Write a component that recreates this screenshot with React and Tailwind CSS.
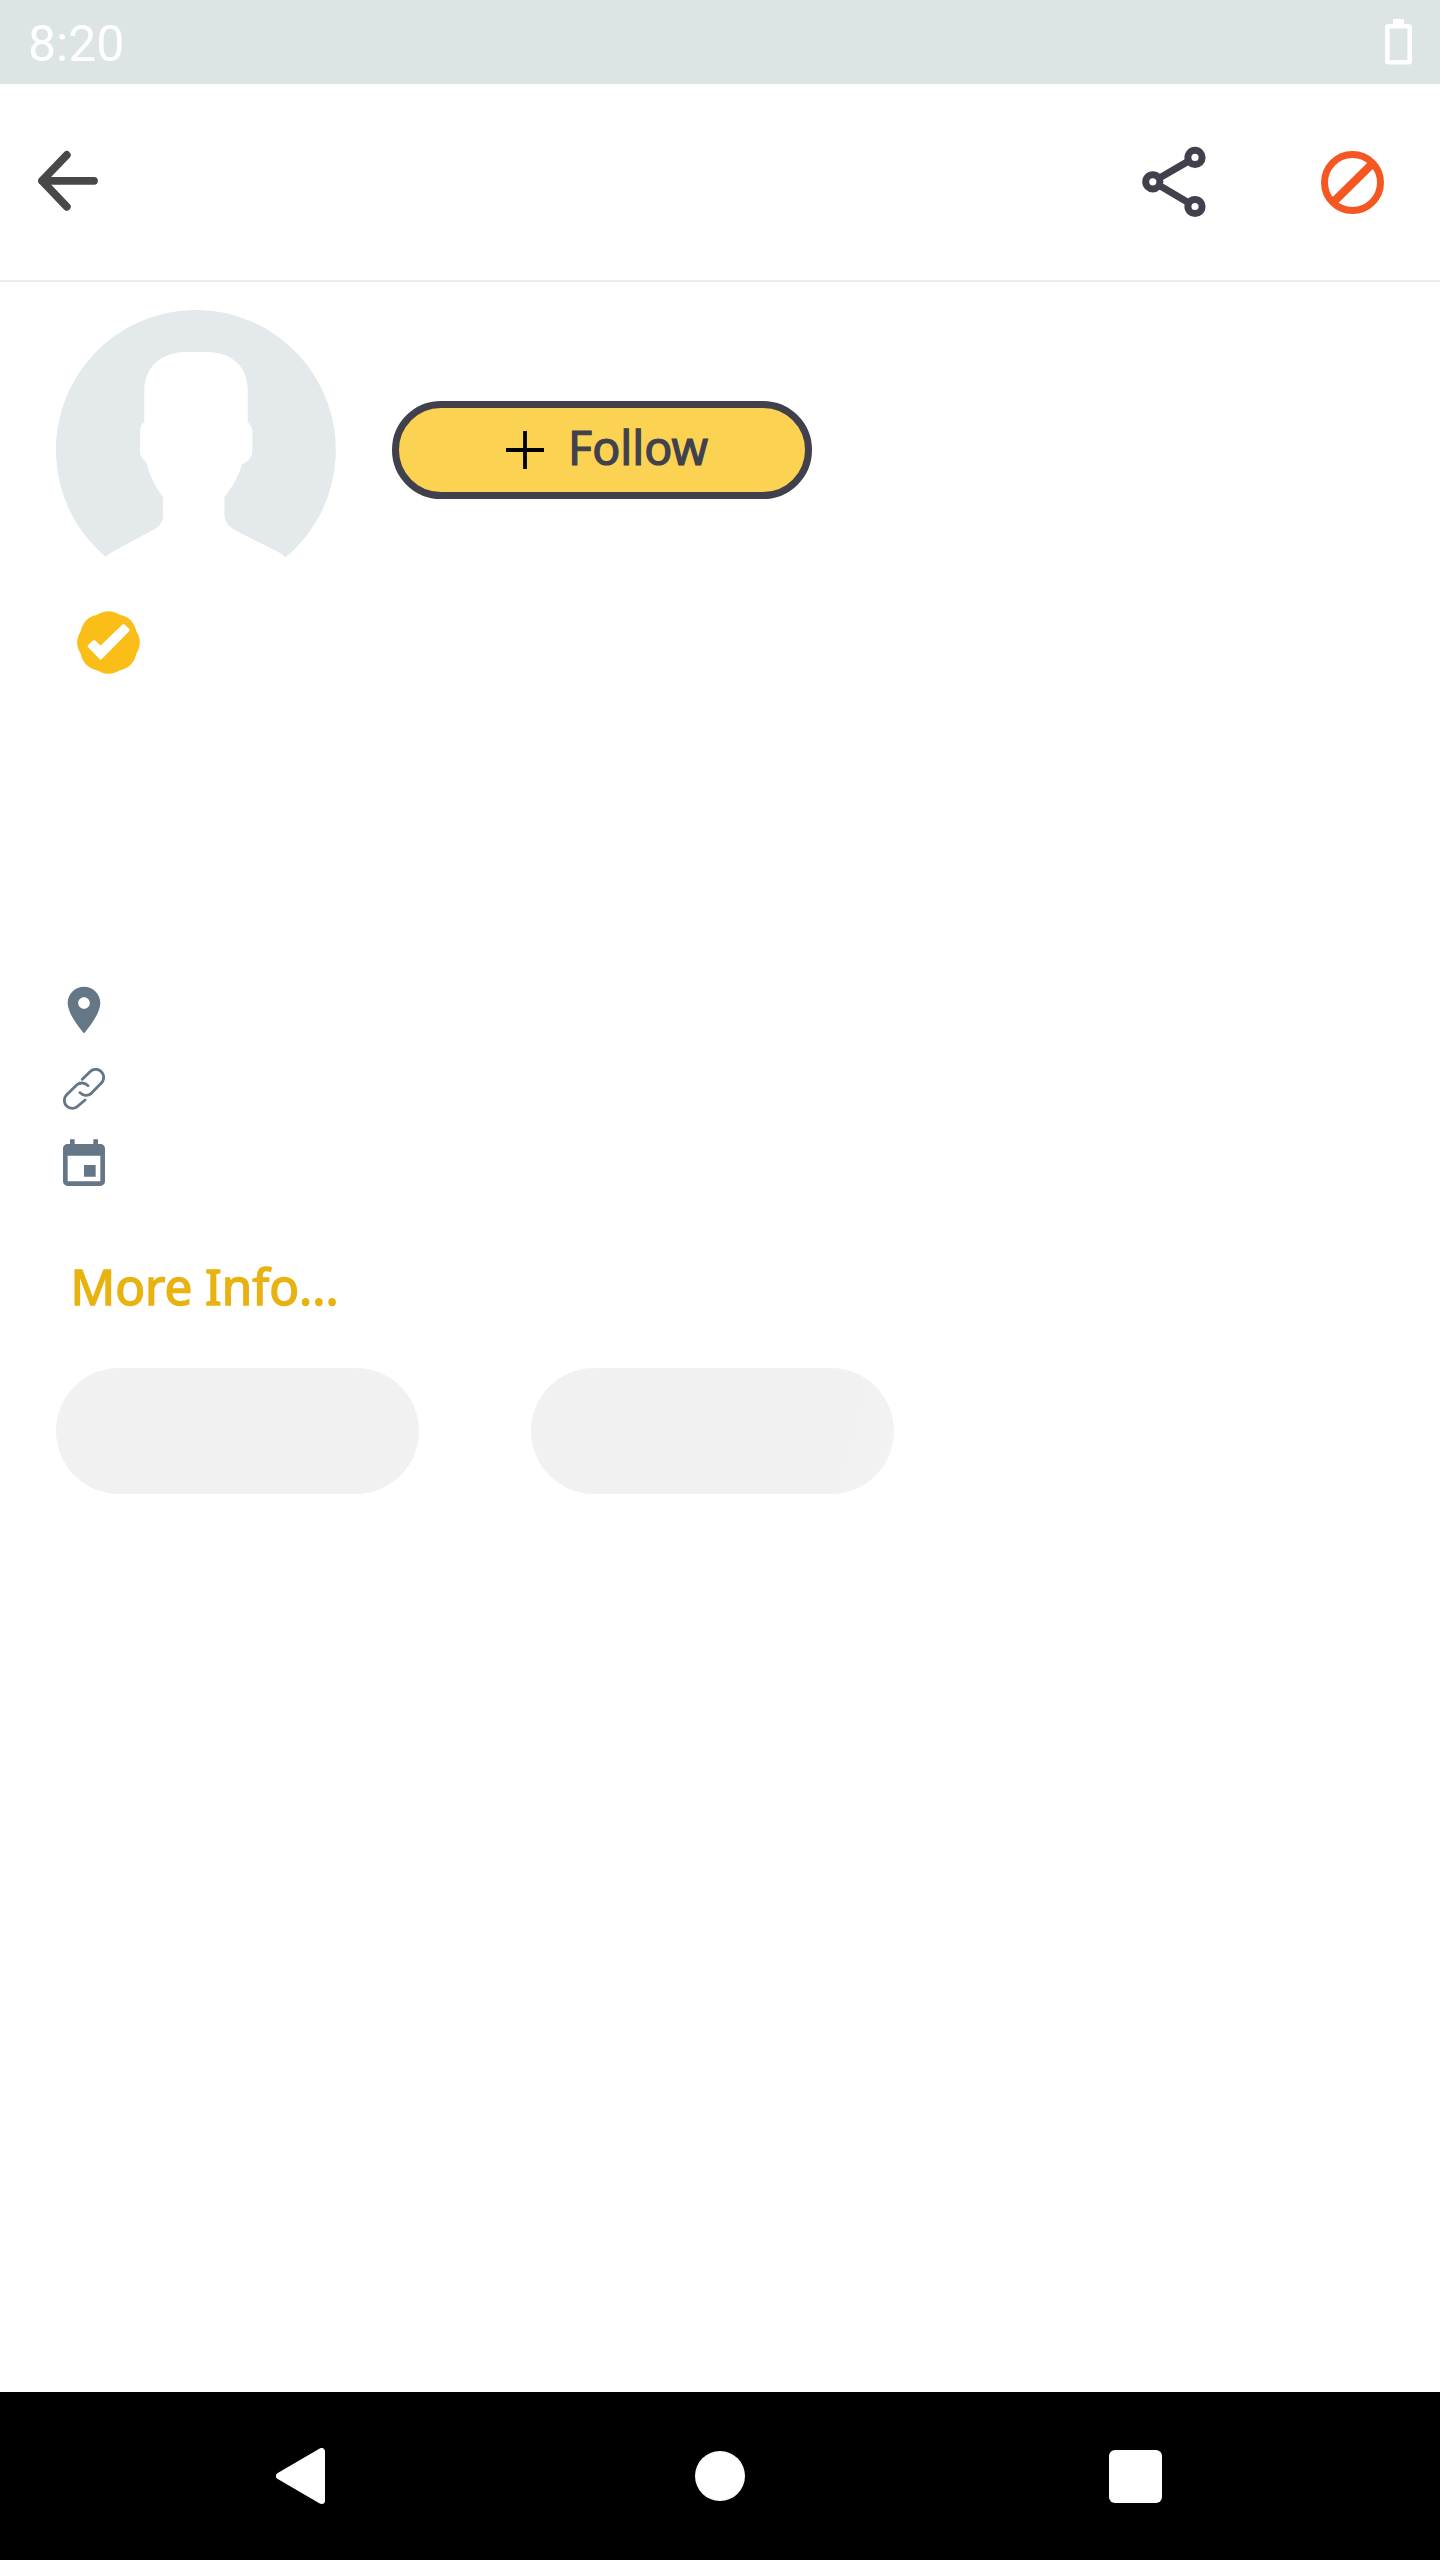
const LOBES = [
  [31.5, 19.84], [39.74, 23.26], [43.16, 31.5], [39.74, 39.74],
  [31.5, 43.16], [23.26, 39.74], [19.84, 31.5], [23.26, 23.26],
];

function StatusBar() {
  return (
    <div className="flex h-[84px] shrink-0 items-start justify-between bg-[#dce4e5] pl-7 pr-7 text-white">
      <span className="mt-[15px] font-['Roboto',sans-serif] text-[50px] leading-[58px]">8:20</span>
      <svg className="mt-[19px] h-[46px] w-[27px]" viewBox="0 0 27 46">
        <path d="M8 0h11v6H8z" fill="#fff" />
        <rect x="2.3" y="7.3" width="22.4" height="36" rx="1.2" fill="none" stroke="#fff" strokeWidth="4.6" />
      </svg>
    </div>
  );
}

function Header() {
  return (
    <header className="flex h-[198px] shrink-0 items-start border-b-2 border-[#e6ecf0] bg-white pl-[38px] pr-14">
      <svg className="mt-[66px] h-[62px] w-[60px]" viewBox="38 150 60 62" fill="none" stroke="#484848" strokeWidth="7.8" strokeLinecap="round" strokeLinejoin="round">
        <path d="M66.8 155L42 180.8l24.8 26M42 180.8h52" />
      </svg>
      <svg className="ml-auto mt-[62px] h-[72px] w-[64px]" viewBox="1142 146 64 72" fill="none" stroke="#41404d" strokeWidth="7">
        <path d="M1159 178.3L1189 160.9M1159 185.3L1189 203" />
        <circle cx="1152.8" cy="181.8" r="7.1" />
        <circle cx="1195" cy="157.4" r="7.1" />
        <circle cx="1195" cy="206.5" r="7.1" />
      </svg>
      <svg className="ml-[115px] mt-[67px] h-[63px] w-[63px]" viewBox="0 0 63 63" fill="none" stroke="#f55723">
        <circle cx="31.5" cy="31.5" r="28" strokeWidth="7" />
        <path d="M14 49.5L50 14" strokeWidth="8.2" />
      </svg>
    </header>
  );
}

function Avatar() {
  return (
    <svg className="h-[248px] w-[280px]" viewBox="48 60 840 744" fill="#e4eaec">
      <path d="M197 801A420 420 0 1 1 737 802Q728 793 715 786L588 722Q553 705 553 672V622C577 592 595 560 606 523Q637 510 637 482V422Q635 407 623 395V300C623 230 575 186 500 186H435C362 186 313 235 313 300V395Q300 407 300 422V485Q302 505 319 517C328 555 345 590 369 622V680Q369 703 343 718L215 787Q205 792 197 801Z" />
    </svg>
  );
}

function FollowButton() {
  return (
    <button className="flex h-[98px] w-[420px] items-center rounded-full border-[7px] border-[#41404d] bg-[#fcd253] pl-[107px]">
      <svg className="h-[38px] w-[38px]" viewBox="0 0 38 38" stroke="#000" strokeWidth="3.8">
        <path d="M0 19h38M19 0v38" />
      </svg>
      <span className="-mt-1.5 ml-6 whitespace-nowrap text-left text-[46.5px] leading-[64px] text-[#41404d] [-webkit-text-stroke:1.2px_#41404d]">Follow</span>
    </button>
  );
}

function VerifiedBadge() {
  return (
    <svg className="h-[63px] w-[63px]" viewBox="0 0 63 63">
      <g fill="#fbbe18">
        {LOBES.map(([x, y]) => (
          <circle key={`${x}-${y}`} cx={x} cy={y} r="19.7" />
        ))}
      </g>
      <path d="M12.2 35.2L17 30.7L23.7 36.7L46.6 14.7L51 19.2L23.7 46.9Z" fill="#fff" stroke="#fff" strokeWidth="3.2" strokeLinejoin="round" />
    </svg>
  );
}

function Details() {
  return (
    <div className="flex w-14 flex-col">
      <svg className="h-14 w-14" viewBox="0 0 24 24" fill="#657786">
        <path d="M12 2C8.13 2 5 5.13 5 9c0 5.25 7 13 7 13s7-7.75 7-13c0-3.87-3.13-7-7-7zm0 9.5c-1.38 0-2.5-1.12-2.5-2.5s1.12-2.5 2.5-2.5 2.5 1.12 2.5 2.5-1.12 2.5-2.5 2.5z" />
      </svg>
      <svg className="ml-[7px] mt-[30px] h-[42px] w-[42px]" viewBox="39 294 126 126" fill="none" stroke="#657786" strokeWidth="8.5" strokeLinecap="round">
        <path d="M97 328L120 305A24 24 0 0 1 154 339L124 370A24 24 0 0 1 90 368" />
        <path d="M105 390L84 408A24 24 0 0 1 50 374L80 345A24 24 0 0 1 114 347" />
      </svg>
      <svg className="mt-[27px] h-14 w-14" viewBox="0 0 24 24" fill="#657786">
        <path d="M12 12v5h5v-5zM16 1v2H8V1H6v2H5c-1.11 0-1.99.9-1.99 2L3 19c0 1.1.89 2 2 2h14c1.1 0 2-.9 2-2V5c0-1.1-.9-2-2-2h-1V1h-2zm3 18H5V8h14v11z" fillRule="evenodd" />
      </svg>
    </div>
  );
}

function NavigationBar() {
  return (
    <nav className="flex h-[168px] shrink-0 items-center bg-black pl-[276px] pr-[278px]">
      <svg className="h-14 w-[49px]" viewBox="0 0 49 56" fill="#fff" stroke="#fff" strokeWidth="7" strokeLinejoin="round">
        <path d="M3.5 28L45.5 3.5V52.5Z" />
      </svg>
      <span className="ml-[370px] h-[50px] w-[50px] rounded-full bg-white" />
      <span className="ml-auto h-[53px] w-[53px] rounded-[6px] bg-white" />
    </nav>
  );
}

export default function App() {
  return (
    <div className="flex h-[2560px] w-[1440px] flex-col bg-white font-['Noto_Sans',sans-serif]">
      <StatusBar />
      <Header />
      <main className="flex flex-1 flex-col items-start px-14 pt-7">
        <div className="flex items-center gap-14 pb-[32px]">
          <div className="h-[248px]">
            <Avatar />
          </div>
          <div className="mt-[32px]">
            <FollowButton />
          </div>
        </div>
        <div className="ml-[21px] mt-[21px] h-[371px]">
          <VerifiedBadge />
        </div>
        <Details />
        <a className="ml-[14.5px] mt-[58px] whitespace-nowrap text-[49.3px] leading-[70px] text-[#e8b210] [-webkit-text-stroke:1.5px_#e8b210]">More Info...</a>
        <div className="mt-[47px] flex gap-28">
          <div className="h-[126px] w-[363px] rounded-full bg-[#f1f1f1]" />
          <div className="h-[126px] w-[363px] rounded-full bg-[linear-gradient(107deg,#f1f1f1_86%,#f2f2f2_87%,#f2f2f2_94%,#f3f3f3_95%)]" />
        </div>
      </main>
      <NavigationBar />
    </div>
  );
}
